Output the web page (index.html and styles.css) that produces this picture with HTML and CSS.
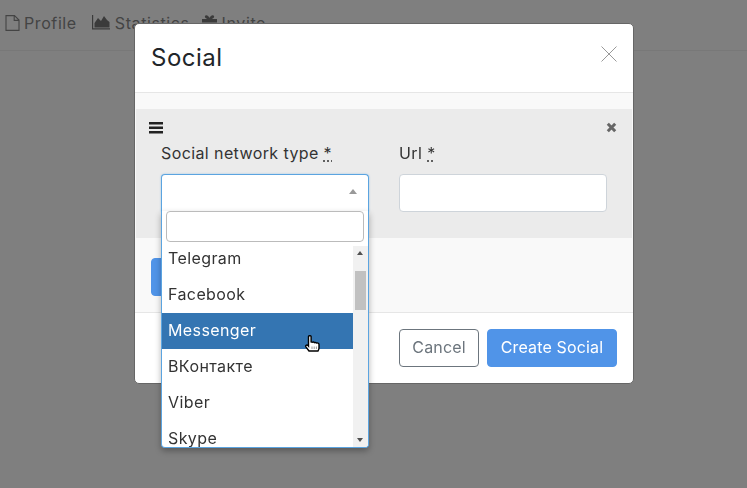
FILE: index.html
```html
<!DOCTYPE html>
<html lang="en">
<head>
    <meta charset="UTF-8">
    <meta name="viewport" content="width=device-width, initial-scale=1.0">
    <title>Social</title>
    <link rel="stylesheet" href="styles.css">
</head>
<body>
    <!-- Page behind the modal -->
    <div class="nav">
        <a class="nav-link">
            <svg class="nav-icon" width="15" height="16" viewBox="0 0 15 16"><path d="M1 .6h8.500L14 5v10.400H1zM9.200.6v4.800H14" fill="none" stroke="#888" stroke-width="1.100"/></svg>
            Profile
        </a>
        <a class="nav-link">
            <svg class="nav-icon" width="18" height="15" viewBox="0 0 18 15"><path d="M.6 0v13.900H18" fill="none" stroke="#777" stroke-width="1.200"/><path d="M2.500 12.500V8l3.500-5 3 3 3-5 3 4 2.500 2v5.500z" fill="#777"/></svg>
            Statistics
        </a>
        <a class="nav-link">
            <svg class="nav-icon" width="15" height="15" viewBox="0 0 15 15"><path d="M0 4h15v3.500H0zM1 8.500h5.500V15H2a1 1 0 0 1-1-1zM8.500 8.500H14V14a1 1 0 0 1-1 1H8.500zM7 4C3 4 2 1.500 3.500.5S7 1.500 7.500 3C8 1.500 10 -.5 11.500.5S12 4 8 4z" fill="#777"/></svg>
            Invite
        </a>
    </div>

    <div class="backdrop"></div>

    <div class="modal">
        <div class="modal-header">
            <h1>Social</h1>
            <svg class="modal-close" width="16" height="16" viewBox="0 0 16 16"><path d="M.5.500l15 15M15.500.500l-15 15" stroke="#999" stroke-width="1"/></svg>
        </div>

        <div class="modal-body">
            <div class="fieldset">
                <div class="fieldset-tools">
                    <svg width="14" height="12" viewBox="0 0 14 12"><path d="M0 0h14v2.400H0zM0 4.500h14v2.400H0zM0 9h14v2.400H0z" fill="#222"/></svg>
                    <svg width="11" height="11" viewBox="0 0 11 11"><path d="M1.800 1.800l7.400 7.400M9.200 1.800L1.800 9.200" stroke="#666" stroke-width="3"/></svg>
                </div>
                <div class="fields">
                    <div class="field">
                        <label>Social network type <abbr>*</abbr></label>
                        <div class="select open">
                            <span class="select-arrow"></span>
                            <div class="dropdown">
                                <input class="dropdown-search" type="text">
                                <div class="dropdown-list">
                                    <ul class="options">
                                        <li>Telegram</li>
                                        <li>Facebook</li>
                                        <li class="active">Messenger</li>
                                        <li>ВКонтакте</li>
                                        <li>Viber</li>
                                        <li>Skype</li>
                                    </ul>
                                    <div class="scrollbar">
                                        <span class="scroll-up"></span>
                                        <span class="scroll-thumb"></span>
                                        <span class="scroll-down"></span>
                                    </div>
                                </div>
                            </div>
                        </div>
                    </div>
                    <div class="field">
                        <label>Url <abbr>*</abbr></label>
                        <input class="text-input" type="text">
                    </div>
                </div>
            </div>
            <button class="btn btn-primary btn-add">Add</button>
        </div>

        <div class="modal-footer">
            <button class="btn btn-outline">Cancel</button>
            <button class="btn btn-primary">Create Social</button>
        </div>
    </div>

    <!-- Mouse pointer -->
    <svg class="cursor" width="17" height="18" viewBox="0 0 17 18"><path d="M3.500 1.500c0-1.100 2.600-1.100 2.600 0v5.500l1.400.2c.8-.4 1.500-.2 1.900.4.800-.4 1.500-.2 1.900.4.900-.3 2.700 0 2.700 1.500v3.400c0 1.400-.4 2-1 3.100H4L.9 11.800c-.8-1.200.8-2.300 1.900-1.400l.7.800z" fill="#fff" stroke="#000" stroke-width="1.400"/><path d="M7 11.500v2.500M9.200 11.500v2.500M11.400 11.500v2.500" stroke="#999"/></svg>
</body>
</html>
```

FILE: styles.css
```css
* {
    margin: 0;
    padding: 0;
    box-sizing: border-box;
}

body {
    font-family: Inter, "Noto Sans", sans-serif;
    letter-spacing: 0.4px;
    background: #fff;
    color: #333;
    height: 488px;
    overflow: hidden;
}

.nav {
    display: flex;
    gap: 15px;
    height: 51px;
    padding: 14px 5px 0;
    border-bottom: 1px solid #f0f0f0;
    font-size: 16px;
    letter-spacing: 0.6px;
    color: #888;
}

.nav-link {
    display: flex;
    align-items: flex-start;
    gap: 5px;
    line-height: 18px;
}

.nav-link:first-child {
    gap: 4px;
}

.nav-link:last-child {
    margin-left: -3px;
}

.nav-icon {
    margin-top: 1px;
}

.backdrop {
    position: fixed;
    inset: 0;
    background: rgba(0, 0, 0, 0.5);
}

.modal {
    position: fixed;
    top: 23px;
    left: 134px;
    width: 500px;
    height: 361px;
    background: #fff;
    border: 1px solid #666;
    border-radius: 5px;
    display: flex;
    flex-direction: column;
}

.modal-header {
    display: flex;
    justify-content: space-between;
    align-items: flex-start;
    height: 69px;
    padding: 21px 16px 0;
    border-bottom: 1px solid #e6e6e6;
}

.modal-header h1 {
    font-size: 24px;
    font-weight: 400;
    line-height: 26px;
    letter-spacing: 0.5px;
    color: #212529;
}

.modal-close {
    margin-top: 1px;
}

.modal-body {
    height: 220px;
    padding-top: 16px;
    background: #f9f9f9;
    border-bottom: 1px solid #e6e6e6;
}

.fieldset {
    height: 129px;
    margin: 0 1px;
    padding: 13px 15px 0 13px;
    background: #ebebeb;
}

.fieldset-tools {
    display: flex;
    justify-content: space-between;
    height: 14px;
}

.fields {
    display: grid;
    grid-template-columns: 208px 208px;
    gap: 30px;
    padding: 6px 0 0 12px;
}

.field label {
    display: block;
    font-size: 16px;
    line-height: 22px;
    margin-bottom: 10px;
}

.field abbr {
    text-decoration: underline dotted;
    text-underline-offset: 2px;
}

.text-input {
    display: block;
    width: 208px;
    height: 38px;
    background: #fff;
    border: 1px solid #ced4da;
    border-radius: 4px;
}

.select {
    position: relative;
    height: 38px;
    background: #fff;
    border: 1px solid #5ba4e0;
    border-bottom: none;
    border-radius: 4px 4px 0 0;
    box-shadow: 0 0 2px rgba(91, 164, 224, 0.6);
}

.select-arrow {
    position: absolute;
    top: 14px;
    right: 11px;
    border: 4px solid transparent;
    border-top: none;
    border-bottom: 5px solid #999;
}

.dropdown {
    position: absolute;
    top: 36px;
    left: -1px;
    width: 208px;
    height: 237px;
    background: #fff;
    border: 1px solid #5ba4e0;
    border-top: none;
    border-radius: 0 0 4px 4px;
    box-shadow: 0 3px 6px rgba(0, 0, 0, 0.3);
    display: flex;
    flex-direction: column;
    overflow: hidden;
}

.dropdown-search {
    flex: none;
    display: block;
    width: 198px;
    height: 31px;
    margin-left: 4px;
    background: #fff;
    border: 1px solid #bbb;
    border-radius: 4px;
}

.dropdown-list {
    position: relative;
    flex: 1;
    min-height: 0;
    margin-top: -1px;
    overflow: hidden;
}

.options {
    list-style: none;
    width: 191px;
}

.options li {
    height: 36px;
    padding-left: 6px;
    font-size: 16px;
    line-height: 34px;
}

.options li.active {
    background: #3475b2;
    color: #fff;
}

.scrollbar {
    position: absolute;
    top: 5px;
    right: 0;
    bottom: 0;
    width: 15px;
    background: #f1f1f1;
}

.scroll-up,
.scroll-down,
.scroll-thumb {
    position: absolute;
}

.scroll-up {
    top: 5px;
    left: 4px;
    border: 3.500px solid transparent;
    border-top: none;
    border-bottom: 4px solid #505050;
}

.scroll-down {
    bottom: 5px;
    left: 4px;
    border: 3.500px solid transparent;
    border-bottom: none;
    border-top: 4px solid #505050;
}

.scroll-thumb {
    top: 25px;
    left: 2px;
    width: 11px;
    height: 39px;
    background: #c1c1c1;
}

.btn {
    height: 38px;
    padding: 0 0 2px;
    border-radius: 4px;
    font-family: inherit;
    font-size: 16px;
    letter-spacing: 0.15px;
    white-space: nowrap;
}

.btn-primary {
    background: #5094e8;
    border: 1px solid #5094e8;
    color: #fff;
}

.btn-outline {
    background: #fff;
    border: 1px solid #6c757d;
    color: #6c757d;
}

.btn-add {
    display: block;
    margin: 20px 0 0 16px;
    width: 60px;
}

.modal-footer {
    display: flex;
    justify-content: flex-end;
    gap: 8px;
    padding: 16px 16px 0;
}

.modal-footer .btn-outline {
    width: 80px;
}

.modal-footer .btn-primary {
    width: 130px;
}

.cursor {
    position: fixed;
    top: 335px;
    left: 305px;
}
```
